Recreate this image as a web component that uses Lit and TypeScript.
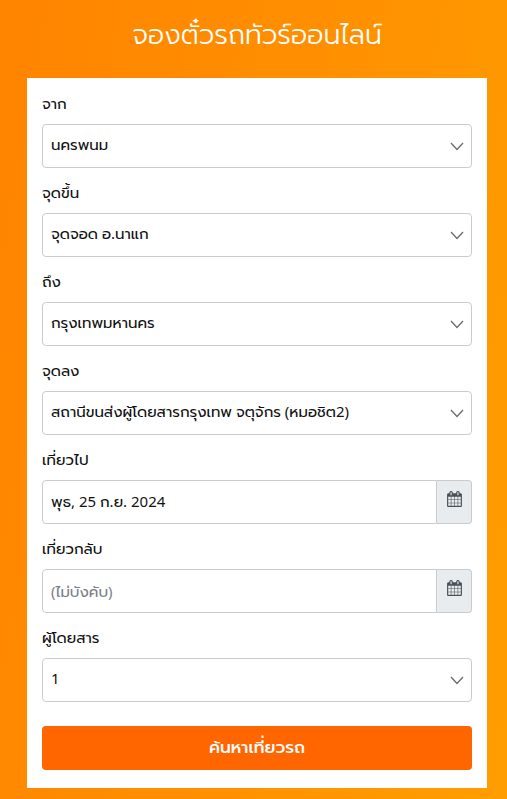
import { LitElement, html, css, svg } from "lit";
import { customElement, state } from "lit/decorators.js";

const chevron = svg`<path d="M1 1 L7 7.5 L13 1" fill="none" stroke="#6b6b6b" stroke-width="1.3"/>`;

const calendar = svg`<path fill="currentColor" d="M128 1664h288v-288H128v288zm352 0h320v-288H480v288zm-352-352h288V992H128v320zm352 0h320V992H480v320zM128 928h288V640H128v288zm736 736h320v-288H864v288zM480 928h320V640H480v288zm768 736h288v-288h-288v288zm-384-352h320V992H864v320zM512 448V160q0-13-9.500-22.500T480 128h-64q-13 0-22.500 9.500T384 160v288q0 13 9.500 22.500T416 480h64q13 0 22.500-9.500T512 448zm736 864h288V992h-288v320zM864 928h320V640H864v288zm384 0h288V640h-288v288zm32-480V160q0-13-9.500-22.500T1248 128h-64q-13 0-22.500 9.500T1152 160v288q0 13 9.500 22.500t22.500 9.500h64q13 0 22.500-9.500t9.500-22.500zm384-64v1280q0 52-38 90t-90 38H128q-52 0-90-38t-38-90V384q0-52 38-90t90-38h128v-96q0-66 47-113T416 0h64q66 0 113 47t47 113v96h384v-96q0-66 47-113t113-47h64q66 0 113 47t47 113v96h128q52 0 90 38t38 90z"/>`;

@customElement("app-root")
export class AppRoot extends LitElement {
  static styles = css`
    :host {
      display: block;
      box-sizing: border-box;
      min-height: 100vh;
      padding: 14px 20px 11px 27px;
      background: linear-gradient(100deg, #ff8400 0%, #ff8f00 50%, #ff9e00 100%);
      color: #111;
      font-family: "Noto Sans", Prompt, "Noto Sans Thai", sans-serif;
      font-size: 15px;
      font-weight: 400;
      line-height: 24px;
    }
    .title {
      margin: 0 0 24px;
      font-size: 27px;
      line-height: 40px;
      font-weight: 300;
      color: #fff;
      text-align: center;
    }
    .card {
      display: flex;
      flex-direction: column;
      gap: 12px;
      padding: 13px 15px 18px;
      background: #fff;
    }
    .field {
      display: flex;
      flex-direction: column;
      gap: 9px;
    }
    .control {
      display: flex;
      position: relative;
    }
    .box {
      box-sizing: border-box;
      flex: 1;
      min-width: 0;
      height: 44px;
      margin: 0;
      padding: 0 8px 4px;
      border: 1px solid #c9cccf;
      border-radius: 4px;
      background: #fff;
      color: #111;
      font: inherit;
      appearance: none;
    }
    .box::placeholder {
      color: #7b8188;
      opacity: 1;
    }
    .date {
      padding-bottom: 0;
      border-radius: 4px 0 0 4px;
    }
    .chevron {
      position: absolute;
      right: 8px;
      top: 18px;
      width: 14px;
      height: 9px;
      pointer-events: none;
    }
    .pick {
      display: flex;
      align-items: center;
      justify-content: center;
      box-sizing: border-box;
      width: 35px;
      padding: 0 0 6px;
      border: 1px solid #c9cccf;
      border-left: 0;
      border-radius: 0 4px 4px 0;
      background: #e9ecef;
      color: #495057;
    }
    .calendar {
      width: 15px;
      height: 16px;
    }
    .submit {
      height: 44px;
      margin-top: 12px;
      padding: 0 0 2px;
      border: 0;
      border-radius: 4px;
      background: #ff6600;
      color: #fff;
      font: inherit;
      font-size: 17px;
      font-weight: 500;
    }
  `;

  @state() private depart = "พุธ, 25 ก.ย. 2024";
  @state() private back = "";

  private select(id: string, label: string, value: string) {
    return html`<div class="field">
      <label for=${id}>${label}</label>
      <div class="control">
        <select class="box" id=${id}><option>${value}</option></select>
        <svg class="chevron" viewBox="0 0 14 9" aria-hidden="true">${chevron}</svg>
      </div>
    </div>`;
  }

  private date(id: string, label: string, value: string, hint: string) {
    return html`<div class="field">
      <label for=${id}>${label}</label>
      <div class="control">
        <input class="box date" id=${id} type="text" .value=${value} placeholder=${hint} />
        <button class="pick" type="button" aria-label=${label}>
          <svg class="calendar" viewBox="0 0 1664 1792" aria-hidden="true">${calendar}</svg>
        </button>
      </div>
    </div>`;
  }

  render() {
    return html`
      <h1 class="title">จองตั๋วรถทัวร์ออนไลน์</h1>
      <form class="card" @submit=${(e: Event) => e.preventDefault()}>
        ${this.select("from", "จาก", "นครพนม")}
        ${this.select("board", "จุดขึ้น", "จุดจอด อ.นาแก")}
        ${this.select("to", "ถึง", "กรุงเทพมหานคร")}
        ${this.select("drop", "จุดลง", "สถานีขนส่งผู้โดยสารกรุงเทพ จตุจักร (หมอชิต2)")}
        ${this.date("depart", "เที่ยวไป", this.depart, "")}
        ${this.date("return", "เที่ยวกลับ", this.back, "(ไม่บังคับ)")}
        ${this.select("seats", "ผู้โดยสาร", "1")}
        <button class="submit" type="submit">ค้นหาเที่ยวรถ</button>
      </form>
    `;
  }
}
